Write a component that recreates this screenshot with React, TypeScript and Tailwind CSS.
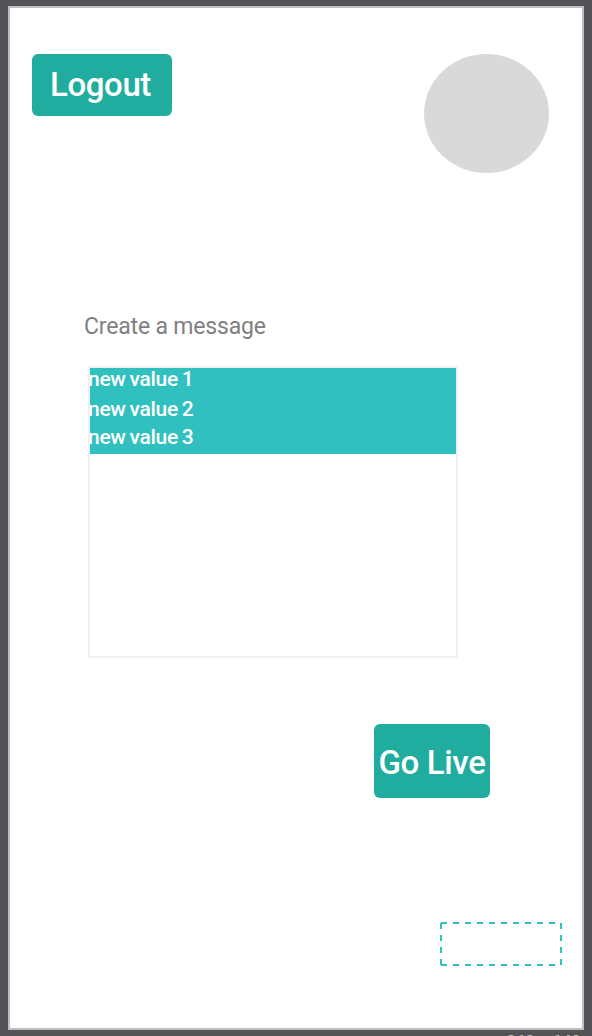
const messages = [
  { text: "new value 1", spacing: "h-[30px]" },
  { text: "new value 2", spacing: "h-7" },
  { text: "new value 3", spacing: "h-7" },
];

function Placeholder() {
  return (
    <svg
      className="block h-11 w-[122px]"
      viewBox="0 0 122 44"
      fill="none"
      stroke="#30c0c0"
      strokeWidth="2"
      strokeDasharray="6 6"
      shapeRendering="crispEdges"
    >
      <path d="M1 1H121M1 43H121M1 1V43M121 1V43" />
    </svg>
  );
}

export default function App() {
  return (
    <div className="flex h-[1036px] w-[592px] flex-col overflow-hidden bg-[#535257] pl-2 pt-1.5 font-['Roboto',sans-serif]">
      <main className="flex h-[1024px] w-[576px] shrink-0 flex-col border-2 border-[#c0c0c0] bg-white">
        <header className="flex items-start justify-between pl-[22px] pr-[33px] pt-[46px]">
          <button className="h-[62px] w-[140px] rounded-md bg-[#20ad9f] pr-[3px] text-[33px] font-medium leading-[62px] tracking-[-0.4px] text-white">
            <span className="whitespace-nowrap">Logout</span>
          </button>
          <div className="mb-px h-[119px] w-[125px] rounded-[50%] bg-[#d9d9d9]" />
        </header>

        <section className="mt-[138px] flex flex-col">
          <h1 className="-mt-px ml-[74px] h-8 whitespace-nowrap text-[23px] font-normal leading-8 tracking-[-0.18px] text-[#808080]">
            Create a message
          </h1>
          <div className="ml-[78px] mt-[23px] h-[292px] w-[370px] overflow-hidden rounded-[2px] border-2 border-[#efeff4]">
            <ul className="h-[86px] overflow-hidden bg-[#30c0c0]">
              {messages.map(({ text, spacing }) => (
                <li
                  key={text}
                  className={`${spacing} -ml-0.5 whitespace-nowrap text-[21px] font-medium leading-[23px] tracking-[-0.3px] text-white [word-spacing:-1px]`}
                >
                  {text}
                </li>
              ))}
            </ul>
          </div>
        </section>

        <button className="ml-[364px] mt-[66px] h-[74px] w-[116px] shrink-0 whitespace-nowrap rounded-md bg-[#20ad9f] text-[33px] font-medium leading-[78px] tracking-[-0.35px] text-white">
          Go Live
        </button>

        <div className="ml-[430px] mt-[124px]">
          <Placeholder />
        </div>
      </main>
      <footer className="mr-[11px] h-[6px] overflow-hidden text-right text-[17px] font-medium leading-[22px] text-[#c0c0c0]">
        360 x 640
      </footer>
    </div>
  );
}
